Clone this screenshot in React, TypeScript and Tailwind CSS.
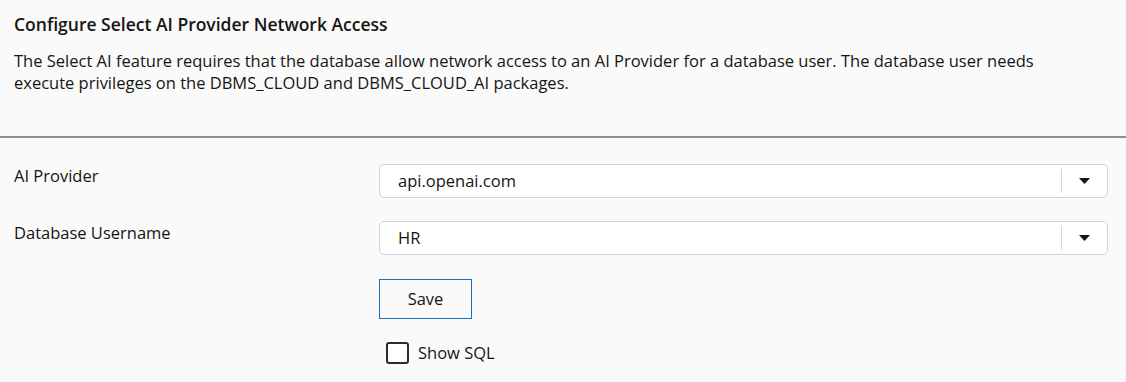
import React, { useState } from 'react';

function SelectBox({ value }: { value: string }) {
  return (
    <div className="flex h-[34px] w-full items-center rounded-[5px] border border-[#d4d2dc] bg-white">
      <span className="flex-1 pl-[18px] text-[16.5px] text-[#161513]">{value}</span>
      <span className="h-[24px] w-px bg-[#d4d2dc]" />
      <span className="flex w-[45px] items-center justify-center">
        <svg width="11" height="6" viewBox="0 0 11 6">
          <path d="M0 0h11L5.5 6z" fill="#161513" />
        </svg>
      </span>
    </div>
  );
}

export default function App() {
  const [showSql, setShowSql] = useState(false);

  return (
    <div className="min-h-[382px] w-[1126px] bg-[#fafafa] text-[#161513]" style={{ fontFamily: '"Open Sans", "Noto Sans", sans-serif' }}>
      <div className="border-b-2 border-[#8f8f8f] px-[14px] pt-[11px] pb-[42px]">
        <h1 className="text-[17.5px] font-semibold leading-[26px]">Configure Select AI Provider Network Access</h1>
        <p className="mt-[13px] max-w-[1040px] text-[16.5px] leading-[22px]">
          The Select AI feature requires that the database allow network access to an AI Provider for a database user. The database user needs execute privileges on the DBMS_CLOUD and DBMS_CLOUD_AI packages.
        </p>
      </div>

      <div className="grid grid-cols-[365px_1fr] gap-y-[23px] pt-[26px] pr-[18px] pl-[14px]">
        <label className="pt-[1px] text-[16.5px] leading-[22px]">AI Provider</label>
        <SelectBox value="api.openai.com" />
        <label className="pt-[1px] text-[16.5px] leading-[22px]">Database Username</label>
        <SelectBox value="HR" />
      </div>

      <div className="pl-[379px] pt-[24px]">
        <button className="h-[40px] w-[93px] border border-[#1a6fc1] bg-[#fafafa] text-[16.5px] text-[#161513]">Save</button>
        <label className="mt-[22px] ml-[7px] flex items-center gap-[9px] text-[16.5px]">
          <input
            type="checkbox"
            checked={showSql}
            onChange={(e) => setShowSql(e.target.checked)}
            className="h-[22px] w-[23px] appearance-none rounded-[3px] border-2 border-[#2b2b2b] bg-white"
          />
          Show SQL
        </label>
      </div>
    </div>
  );
}
